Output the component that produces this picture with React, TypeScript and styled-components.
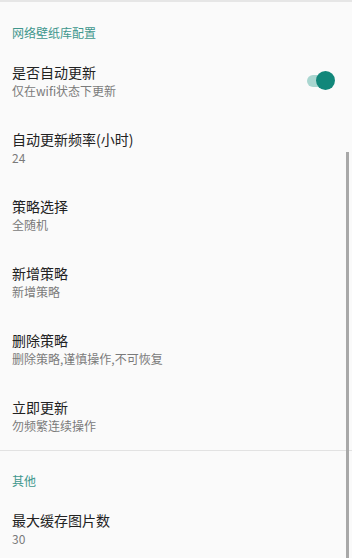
import React from 'react'
import styled, { createGlobalStyle } from 'styled-components'

const GlobalStyle = createGlobalStyle`
  html, body {
    margin: 0;
    padding: 0;
    background: #fafafa;
  }
  body {
    font-family: "Noto Sans CJK SC", Roboto, "Noto Sans", sans-serif;
  }
`

const Screen = styled.div`
  position: relative;
  width: 352px;
  height: 558px;
  overflow: hidden;
  background: #fafafa;
  border-top: 2px solid #e6e6e6;
  box-sizing: border-box;
`

const Category = styled.div<{ $first?: boolean }>`
  padding: ${(p) => (p.$first ? '23px' : '22px')} 12px 7px;
  font-size: 12px;
  line-height: 16px;
  color: #3f978d;
`

const Row = styled.div`
  display: flex;
  align-items: center;
  padding: 14px 19px 15px 12px;
  height: 38px;
`

const Texts = styled.div`
  flex: 1;
  display: flex;
  flex-direction: column;
`

const Title = styled.div`
  font-size: 14px;
  line-height: 20px;
  color: #222;
`

const Summary = styled.div`
  font-size: 12px;
  line-height: 18px;
  color: #7a7a7a;
`

const Divider = styled.div`
  height: 1px;
  background: #e2e2e2;
`

const Switch = styled.div<{ $on: boolean }>`
  position: relative;
  width: 26px;
  height: 12px;
  border-radius: 6px;
  background: ${(p) => (p.$on ? '#a9d6d0' : '#bdbdbd')};
  &::after {
    content: '';
    position: absolute;
    top: -4px;
    left: ${(p) => (p.$on ? '9px' : '-4px')};
    width: 19px;
    height: 19px;
    border-radius: 50%;
    background: ${(p) => (p.$on ? '#11877a' : '#f1f1f1')};
  }
`

const Scrollbar = styled.div`
  position: absolute;
  right: 3px;
  top: 150px;
  bottom: 0;
  width: 3px;
  background: #a8a8a8;
`

type Pref = { title: string; summary: string; toggle?: boolean }

const network: Pref[] = [
  { title: '是否自动更新', summary: '仅在wifi状态下更新', toggle: true },
  { title: '自动更新频率(小时)', summary: '24' },
  { title: '策略选择', summary: '全随机' },
  { title: '新增策略', summary: '新增策略' },
  { title: '删除策略', summary: '删除策略,谨慎操作,不可恢复' },
  { title: '立即更新', summary: '勿频繁连续操作' },
]

const other: Pref[] = [{ title: '最大缓存图片数', summary: '30' }]

const PrefRow = ({ pref }: { pref: Pref }) => (
  <Row>
    <Texts>
      <Title>{pref.title}</Title>
      <Summary>{pref.summary}</Summary>
    </Texts>
    {pref.toggle !== undefined && <Switch $on={pref.toggle} />}
  </Row>
)

export default function App() {
  return (
    <Screen>
      <GlobalStyle />
      <Category $first>网络壁纸库配置</Category>
      {network.map((p) => (
        <PrefRow key={p.title} pref={p} />
      ))}
      <Divider />
      <Category>其他</Category>
      {other.map((p) => (
        <PrefRow key={p.title} pref={p} />
      ))}
      <Scrollbar />
    </Screen>
  )
}
